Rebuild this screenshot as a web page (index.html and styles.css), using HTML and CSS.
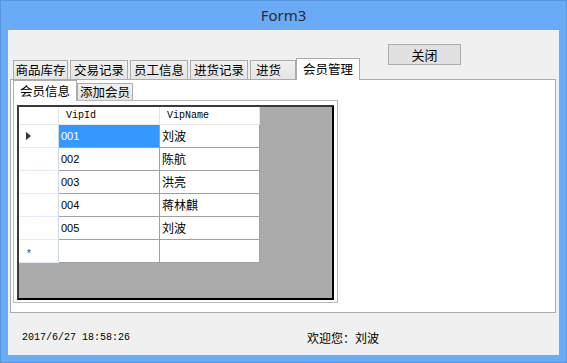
FILE: index.html
```html
<!DOCTYPE html>
<html lang="zh-CN">
<head>
    <meta charset="UTF-8">
    <link rel="stylesheet" href="styles.css">
    <title>Form3</title>
</head>
<body>
    <div class="window">
        <div class="titlebar">Form3</div>
        <div class="client">
            <div class="top">
                <div class="tabs">
                    <span class="tab first">商品库存</span>
                    <span class="tab">交易记录</span>
                    <span class="tab">员工信息</span>
                    <span class="tab">进货记录</span>
                    <span class="tab short">进货</span>
                    <span class="tab active">会员管理</span>
                </div>
                <button class="close-btn">关闭</button>
            </div>

            <div class="tab-panel">
                <div class="subtabs">
                    <span class="subtab active">会员信息</span>
                    <span class="subtab">添加会员</span>
                </div>
                <div class="subpanel">
                    <div class="grid-box">
                        <div class="grid">
                            <div class="hcell corner"></div>
                            <div class="hcell">VipId</div>
                            <div class="hcell">VipName</div>

                            <div class="rowhead"><span class="arrow"></span></div>
                            <div class="cell num selected">001</div>
                            <div class="cell">刘波</div>

                            <div class="rowhead"></div>
                            <div class="cell num">002</div>
                            <div class="cell">陈航</div>

                            <div class="rowhead"></div>
                            <div class="cell num">003</div>
                            <div class="cell">洪亮</div>

                            <div class="rowhead"></div>
                            <div class="cell num">004</div>
                            <div class="cell">蒋林麒</div>

                            <div class="rowhead"></div>
                            <div class="cell num">005</div>
                            <div class="cell">刘波</div>

                            <div class="rowhead star">*</div>
                            <div class="cell"></div>
                            <div class="cell"></div>
                        </div>
                    </div>
                </div>
            </div>

            <div class="status">
                <span class="time">2017/6/27 18:58:26</span>
                <span class="welcome">欢迎您：刘波</span>
            </div>
        </div>
    </div>
</body>
</html>
```

FILE: styles.css
```css
body {
    margin: 0;
    font-family: "Noto Sans CJK SC", "Noto Sans", sans-serif;
    background-color: #ffffff;
}

.window {
    width: 567px;
    height: 363px;
    box-sizing: border-box;
    background-color: #69abf6;
    border: 1px solid #5a96dc;
    padding: 0 7px 7px 7px;
    display: flex;
    flex-direction: column;
}

.titlebar {
    height: 29px;
    line-height: 29px;
    text-align: center;
    font-family: "Noto Sans", sans-serif;
    font-size: 15px;
    color: #2c2c2c;
}

.client {
    flex: 1;
    background-color: #f0f0f0;
    display: flex;
    flex-direction: column;
}

.top {
    height: 35px;
    padding: 14px 0 0 5px;
    display: flex;
    align-items: flex-end;
}

.tabs {
    display: flex;
    align-items: flex-end;
}

.tab {
    box-sizing: border-box;
    width: 58px;
    height: 19px;
    margin-left: 2px;
    border: 1px solid #acacac;
    border-bottom: none;
    background: linear-gradient(#f0f0f0, #e5e5e5);
    font-size: 12.5px;
    line-height: 17px;
    text-align: center;
    color: #000;
}

.tab.first {
    width: 55px;
    margin-left: 0;
}

.tab.short {
    width: 46px;
    text-align: left;
    padding-left: 5px;
}

.tab.active {
    width: 64px;
    height: 22px;
    margin-left: 0;
    margin-bottom: -1px;
    background: #ffffff;
    line-height: 19px;
    position: relative;
    z-index: 1;
}

.close-btn {
    align-self: flex-start;
    width: 73px;
    height: 21px;
    margin-left: 28px;
    padding: 0;
    border: 1px solid #adadad;
    background-color: #e1e1e1;
    font-family: "Noto Sans CJK SC", sans-serif;
    font-size: 13px;
    line-height: 18px;
    color: #000;
}

.tab-panel {
    height: 234px;
    box-sizing: border-box;
    margin: 0 3px 0 2px;
    border: 1px solid #acacac;
    background-color: #ffffff;
}

.subtabs {
    height: 20px;
    padding-left: 2px;
    display: flex;
    align-items: flex-end;
}

.subtab {
    box-sizing: border-box;
    width: 56px;
    height: 17px;
    border: 1px solid #acacac;
    border-bottom: none;
    background: linear-gradient(#f0f0f0, #e5e5e5);
    font-size: 12.5px;
    line-height: 15px;
    text-align: center;
}

.subtab.active {
    width: 64px;
    height: 21px;
    margin-bottom: -1px;
    background: #ffffff;
    line-height: 19px;
    position: relative;
    z-index: 1;
}

.subpanel {
    width: 325px;
    height: 203px;
    box-sizing: border-box;
    margin-left: 2px;
    border: 1px solid #b9b9b9;
    padding: 4px 3px 0 3px;
}

.grid-box {
    width: 317px;
    height: 195px;
    box-sizing: border-box;
    border: 2px solid #000;
    border-top-color: #3a3a3a;
    border-left-color: #3a3a3a;
    background-color: #ababab;
}

.grid {
    display: grid;
    grid-template-columns: 40px 101px 100px;
    grid-template-rows: 18px repeat(6, 23px);
    width: 241px;
}

.hcell {
    box-sizing: border-box;
    background-color: #ffffff;
    border-right: 1px solid #e3e3e3;
    border-bottom: 1px solid #e6e6e6;
    padding-left: 7px;
    font-family: "Liberation Mono", monospace;
    font-size: 10px;
    line-height: 17px;
    color: #000;
}

.hcell.corner {
    border-right-color: #e0e6ef;
}

.rowhead {
    box-sizing: border-box;
    background-color: #ffffff;
    border-right: 1px solid #cfd9e6;
    border-bottom: 1px solid #e4ecf7;
    display: flex;
    align-items: center;
    padding-left: 7px;
}

.arrow {
    width: 0;
    height: 0;
    border-top: 4px solid transparent;
    border-bottom: 4px solid transparent;
    border-left: 5px solid #333;
}

.rowhead.star {
    font-family: "Liberation Sans", sans-serif;
    font-size: 10px;
    color: #444;
    padding-top: 5px;
    padding-left: 8px;
}

.cell {
    box-sizing: border-box;
    background-color: #ffffff;
    border-right: 1px solid #a0a0a0;
    border-bottom: 1px solid #a0a0a0;
    padding-left: 2px;
    font-size: 12px;
    line-height: 22px;
    color: #000;
}

.cell.num {
    font-family: "Liberation Sans", sans-serif;
    font-size: 11px;
}

.cell.selected {
    background-color: #3399ff;
    color: #ffffff;
}

.status {
    flex: 1;
    display: grid;
    grid-template-columns: 285px auto;
    align-items: center;
    padding: 6px 0 0 14px;
}

.time {
    font-family: "Liberation Mono", monospace;
    font-size: 10px;
    color: #000;
}

.welcome {
    font-size: 12px;
    color: #000;
}
```
